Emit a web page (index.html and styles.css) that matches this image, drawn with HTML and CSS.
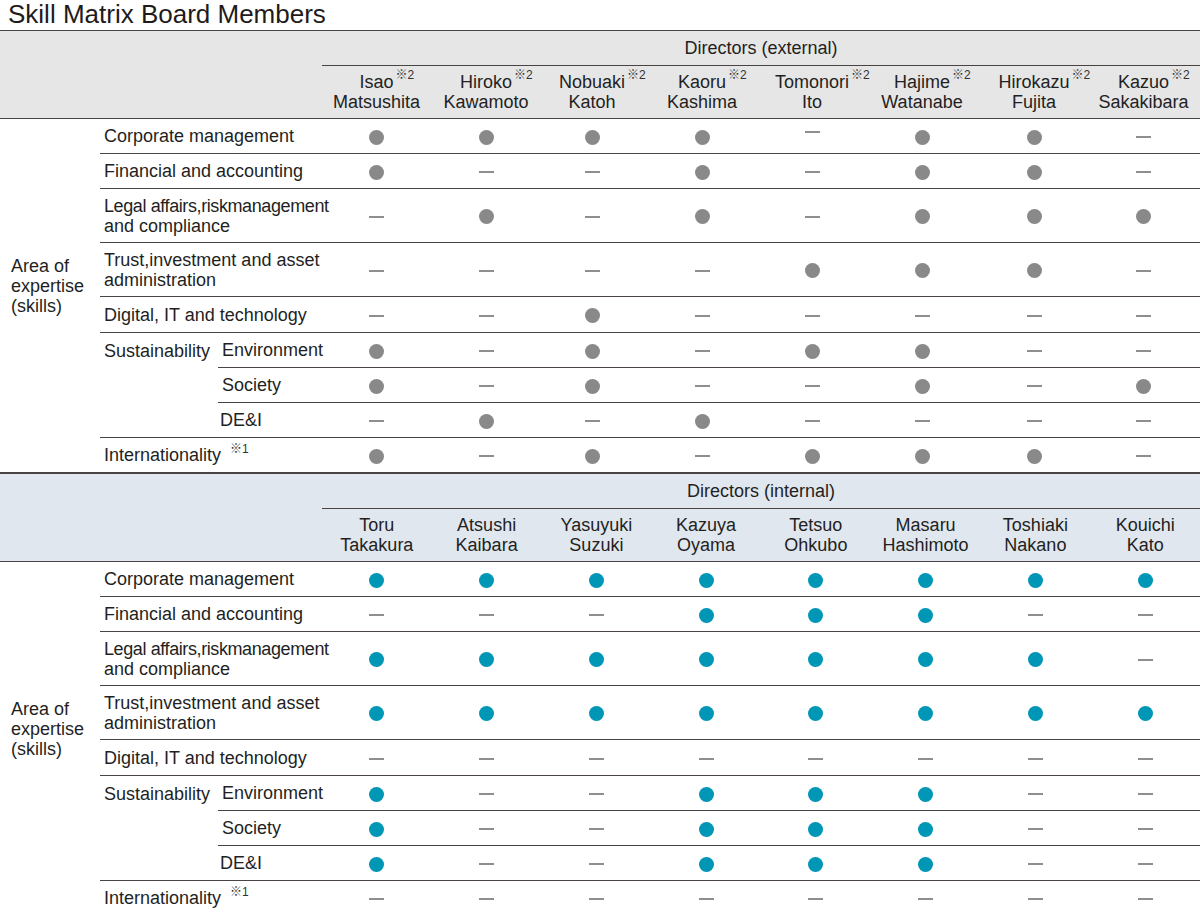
FILE: index.html
```html
<!DOCTYPE html>
<html lang="en">
<head>
<meta charset="utf-8">
<title>Skill Matrix Board Members</title>
<link rel="stylesheet" href="styles.css">
</head>
<body>
<h1 class="title">Skill Matrix Board Members</h1>

<table class="matrix ext">
  <colgroup>
    <col class="c-area"><col class="c-skill"><col class="c-sub">
    <col style="width:109px"><col style="width:110px"><col style="width:102px"><col style="width:118px">
    <col style="width:102px"><col style="width:118px"><col style="width:106px"><col style="width:113px">
  </colgroup>
  <thead>
    <tr class="h1">
      <th class="blank" colspan="3" rowspan="2"></th>
      <th class="group" colspan="8">Directors (external)</th>
    </tr>
    <tr class="h2">
      <th><span class="first">Isao<span class="note">※2</span></span><br>Matsushita</th>
      <th><span class="first">Hiroko<span class="note">※2</span></span><br>Kawamoto</th>
      <th><span class="first">Nobuaki<span class="note">※2</span></span><br>Katoh</th>
      <th><span class="first">Kaoru<span class="note">※2</span></span><br>Kashima</th>
      <th><span class="first">Tomonori<span class="note">※2</span></span><br>Ito</th>
      <th><span class="first">Hajime<span class="note">※2</span></span><br>Watanabe</th>
      <th><span class="first">Hirokazu<span class="note">※2</span></span><br>Fujita</th>
      <th><span class="first">Kazuo<span class="note">※2</span></span><br>Sakakibara</th>
    </tr>
  </thead>
  <tbody>
    <tr class="r1">
      <td class="area" rowspan="9">Area of<br>expertise<br>(skills)</td>
      <td class="skill" colspan="2">Corporate management</td>
      <td><i class="dot"></i></td><td><i class="dot"></i></td><td><i class="dot"></i></td><td><i class="dot"></i></td>
      <td><i class="dash high"></i></td><td><i class="dot"></i></td><td><i class="dot"></i></td><td><i class="dash"></i></td>
    </tr>
    <tr class="r1">
      <td class="skill" colspan="2">Financial and accounting</td>
      <td><i class="dot"></i></td><td><i class="dash"></i></td><td><i class="dash"></i></td><td><i class="dot"></i></td>
      <td><i class="dash"></i></td><td><i class="dot"></i></td><td><i class="dot"></i></td><td><i class="dash"></i></td>
    </tr>
    <tr class="r2">
      <td class="skill" colspan="2"><span class="tight">Legal affairs,riskmanagement</span><br>and compliance</td>
      <td><i class="dash"></i></td><td><i class="dot"></i></td><td><i class="dash"></i></td><td><i class="dot"></i></td>
      <td><i class="dash"></i></td><td><i class="dot"></i></td><td><i class="dot"></i></td><td><i class="dot"></i></td>
    </tr>
    <tr class="r2">
      <td class="skill" colspan="2">Trust,investment and asset<br>administration</td>
      <td><i class="dash"></i></td><td><i class="dash"></i></td><td><i class="dash"></i></td><td><i class="dash"></i></td>
      <td><i class="dot"></i></td><td><i class="dot"></i></td><td><i class="dot"></i></td><td><i class="dash"></i></td>
    </tr>
    <tr class="r1b">
      <td class="skill" colspan="2">Digital, IT and technology</td>
      <td><i class="dash"></i></td><td><i class="dash"></i></td><td><i class="dot"></i></td><td><i class="dash"></i></td>
      <td><i class="dash"></i></td><td><i class="dash"></i></td><td><i class="dash"></i></td><td><i class="dash"></i></td>
    </tr>
    <tr class="r1">
      <td class="skill sus" rowspan="3">Sustainability</td>
      <td class="sub">Environment</td>
      <td><i class="dot"></i></td><td><i class="dash"></i></td><td><i class="dot"></i></td><td><i class="dash"></i></td>
      <td><i class="dot"></i></td><td><i class="dot"></i></td><td><i class="dash"></i></td><td><i class="dash"></i></td>
    </tr>
    <tr class="r1">
      <td class="sub">Society</td>
      <td><i class="dot"></i></td><td><i class="dash"></i></td><td><i class="dot"></i></td><td><i class="dash"></i></td>
      <td><i class="dash"></i></td><td><i class="dot"></i></td><td><i class="dash"></i></td><td><i class="dot"></i></td>
    </tr>
    <tr class="r1">
      <td class="sub dei">DE&amp;I</td>
      <td><i class="dash"></i></td><td><i class="dot"></i></td><td><i class="dash"></i></td><td><i class="dot"></i></td>
      <td><i class="dash"></i></td><td><i class="dash"></i></td><td><i class="dash"></i></td><td><i class="dash"></i></td>
    </tr>
    <tr class="r1">
      <td class="skill" colspan="2">Internationality <span class="note-inline">※1</span></td>
      <td><i class="dot"></i></td><td><i class="dash"></i></td><td><i class="dot"></i></td><td><i class="dash"></i></td>
      <td><i class="dot"></i></td><td><i class="dot"></i></td><td><i class="dot"></i></td><td><i class="dash"></i></td>
    </tr>
  </tbody>
</table>

<table class="matrix int">
  <colgroup>
    <col class="c-area"><col class="c-skill"><col class="c-sub">
    <col class="c-dir"><col class="c-dir"><col class="c-dir"><col class="c-dir">
    <col class="c-dir"><col class="c-dir"><col class="c-dir"><col class="c-dir">
  </colgroup>
  <thead>
    <tr class="h1">
      <th class="blank" colspan="3" rowspan="2"></th>
      <th class="group" colspan="8">Directors (internal)</th>
    </tr>
    <tr class="h2">
      <th>Toru<br>Takakura</th>
      <th>Atsushi<br>Kaibara</th>
      <th>Yasuyuki<br>Suzuki</th>
      <th>Kazuya<br>Oyama</th>
      <th>Tetsuo<br>Ohkubo</th>
      <th>Masaru<br>Hashimoto</th>
      <th>Toshiaki<br>Nakano</th>
      <th>Kouichi<br>Kato</th>
    </tr>
  </thead>
  <tbody>
    <tr class="r1">
      <td class="area" rowspan="9">Area of<br>expertise<br>(skills)</td>
      <td class="skill" colspan="2">Corporate management</td>
      <td><i class="dot"></i></td><td><i class="dot"></i></td><td><i class="dot"></i></td><td><i class="dot"></i></td>
      <td><i class="dot"></i></td><td><i class="dot"></i></td><td><i class="dot"></i></td><td><i class="dot"></i></td>
    </tr>
    <tr class="r1">
      <td class="skill" colspan="2">Financial and accounting</td>
      <td><i class="dash"></i></td><td><i class="dash"></i></td><td><i class="dash"></i></td><td><i class="dot"></i></td>
      <td><i class="dot"></i></td><td><i class="dot"></i></td><td><i class="dash"></i></td><td><i class="dash"></i></td>
    </tr>
    <tr class="r2">
      <td class="skill" colspan="2"><span class="tight">Legal affairs,riskmanagement</span><br>and compliance</td>
      <td><i class="dot"></i></td><td><i class="dot"></i></td><td><i class="dot"></i></td><td><i class="dot"></i></td>
      <td><i class="dot"></i></td><td><i class="dot"></i></td><td><i class="dot"></i></td><td><i class="dash"></i></td>
    </tr>
    <tr class="r2">
      <td class="skill" colspan="2">Trust,investment and asset<br>administration</td>
      <td><i class="dot"></i></td><td><i class="dot"></i></td><td><i class="dot"></i></td><td><i class="dot"></i></td>
      <td><i class="dot"></i></td><td><i class="dot"></i></td><td><i class="dot"></i></td><td><i class="dot"></i></td>
    </tr>
    <tr class="r1b">
      <td class="skill" colspan="2">Digital, IT and technology</td>
      <td><i class="dash"></i></td><td><i class="dash"></i></td><td><i class="dash"></i></td><td><i class="dash"></i></td>
      <td><i class="dash"></i></td><td><i class="dash"></i></td><td><i class="dash"></i></td><td><i class="dash"></i></td>
    </tr>
    <tr class="r1">
      <td class="skill sus" rowspan="3">Sustainability</td>
      <td class="sub">Environment</td>
      <td><i class="dot"></i></td><td><i class="dash"></i></td><td><i class="dash"></i></td><td><i class="dot"></i></td>
      <td><i class="dot"></i></td><td><i class="dot"></i></td><td><i class="dash"></i></td><td><i class="dash"></i></td>
    </tr>
    <tr class="r1">
      <td class="sub">Society</td>
      <td><i class="dot"></i></td><td><i class="dash"></i></td><td><i class="dash"></i></td><td><i class="dot"></i></td>
      <td><i class="dot"></i></td><td><i class="dot"></i></td><td><i class="dash"></i></td><td><i class="dash"></i></td>
    </tr>
    <tr class="r1">
      <td class="sub dei">DE&amp;I</td>
      <td><i class="dot"></i></td><td><i class="dash"></i></td><td><i class="dash"></i></td><td><i class="dot"></i></td>
      <td><i class="dot"></i></td><td><i class="dot"></i></td><td><i class="dash"></i></td><td><i class="dash"></i></td>
    </tr>
    <tr class="r1">
      <td class="skill" colspan="2">Internationality <span class="note-inline">※1</span></td>
      <td><i class="dash"></i></td><td><i class="dash"></i></td><td><i class="dash"></i></td><td><i class="dash"></i></td>
      <td><i class="dash"></i></td><td><i class="dash"></i></td><td><i class="dash"></i></td><td><i class="dash"></i></td>
    </tr>
  </tbody>
</table>
</body>
</html>
```

FILE: styles.css
```css
html, body {
  margin: 0;
  padding: 0;
  background: #ffffff;
}

body {
  width: 1200px;
  color: #231f1f;
  font-family: "Liberation Sans", Arial, "Noto Sans CJK JP", sans-serif;
  font-size: 18px;
  line-height: 20px;
}

.title {
  margin: 0;
  padding: 0 0 0 8px;
  height: 30px;
  font-size: 26px;
  font-weight: normal;
  line-height: 28px;
  color: #1f1b1b;
}

.matrix {
  width: 1200px;
  border-collapse: collapse;
  table-layout: fixed;
}

.c-area { width: 100px; }
.c-skill { width: 118px; }
.c-sub { width: 104px; }
.c-dir { width: 109.75px; }

.matrix th,
.matrix td {
  padding: 0;
  font-weight: normal;
  text-align: center;
  vertical-align: middle;
}

.matrix thead tr {
  background: #e6e6e6;
}

.matrix.int thead tr {
  background: #e1e7ee;
}

.matrix thead .h1 th {
  height: 34px;
}

.matrix thead .h1 .blank {
  border-top: 1px solid #4a4343;
  border-bottom: 1px solid #4a4343;
}

.matrix thead .group {
  border-top: 1px solid #4a4343;
  border-bottom: 1px solid #4a4343;
}

.matrix thead .h2 th {
  height: 52px;
  border-bottom: 1px solid #4a4343;
}

.first {
  position: relative;
}

.note {
  position: absolute;
  left: 100%;
  top: -4px;
  margin-left: 2px;
  font-size: 12px;
  line-height: 14px;
  white-space: nowrap;
  color: #333;
}

.note-inline {
  font-size: 12px;
  vertical-align: 8px;
  line-height: 0;
  margin-left: 4px;
  color: #333;
}

.matrix tbody td {
  border-top: 1px solid #4a4343;
  border-bottom: 1px solid #4a4343;
}

.matrix tbody .r1 td { height: 34px; }
.matrix tbody .r1b td { height: 35px; }
.matrix tbody .r2 td { height: 53px; }

.matrix tbody td.area {
  border-top: 1px solid #4a4343;
  border-bottom: 1px solid #4a4343;
  text-align: left;
  padding: 0 0 20px 11px;
}

.matrix tbody td.skill,
.matrix tbody td.sub {
  text-align: left;
  padding-left: 4px;
  white-space: nowrap;
}

.tight {
  letter-spacing: -0.4px;
}

.matrix tbody td.sus {
  vertical-align: top;
  padding-top: 8px;
}

.matrix tbody td.dei {
  padding-left: 2px;
}

.dot,
.dash {
  display: inline-block;
  vertical-align: middle;
}

.dot {
  width: 15px;
  height: 15px;
  border-radius: 50%;
  background: #898989;
}

.int .dot {
  background: #0096b5;
}

.dash {
  width: 15px;
  height: 2px;
  background: #8e8e8e;
}

.dash.high {
  margin-bottom: 10px;
}
```
